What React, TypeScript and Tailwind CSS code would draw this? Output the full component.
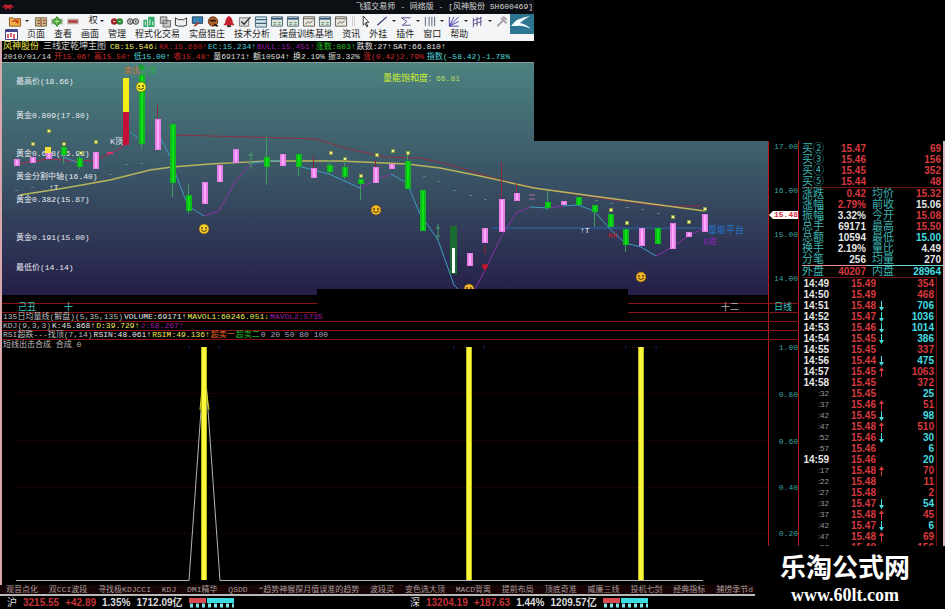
import type { ReactNode } from "react";

const mono = "font-['Liberation_Mono','Noto_Sans_CJK_SC',monospace]";
const sans = "font-['Liberation_Sans','Noto_Sans_CJK_SC',sans-serif]";

type Seg = { t: string; c: string };

const infoTop: Seg[] = [
  { t: "CB:15.546↓", c: "text-[#f4f060]" },
  { t: "KK:15.680↑", c: "text-[#b81c22]" },
  { t: "EC:15.234↑", c: "text-[#4ccfd6]" },
  { t: "BULL:15.451↑", c: "text-[#a01aa8]" },
  { t: "涨数:803↑", c: "text-[#22c025]" },
  { t: "跌数:27↑", c: "text-[#e4e4e4]" },
  { t: "SAT:66.810↑", c: "text-[#e4e4e4]" },
];

const infoBottom: Seg[] = [
  { t: "2010/01/14", c: "text-[#d4d4d4]" },
  { t: "开15.06↑", c: "text-[#d0282c]" },
  { t: "高15.50↑", c: "text-[#d0282c]" },
  { t: "低15.00↑", c: "text-[#4fd6dc]" },
  { t: "收15.48↑", c: "text-[#d0282c]" },
  { t: "量69171↑", c: "text-[#dedede]" },
  { t: "额10594↑", c: "text-[#dedede]" },
  { t: "换2.19%", c: "text-[#dedede]" },
  { t: "振3.32%", c: "text-[#dedede]" },
  { t: "涨(0.42)2.79%", c: "text-[#d0282c]" },
  { t: "指数(-58.42)-1.78%", c: "text-[#4fd6dc]" },
];

const indicators: Seg[][] = [
  [
    { t: "135日均量线(解盘)(5,35,135)", c: "text-[#bdbdbd]" },
    { t: "VOLUME:69171↑", c: "text-[#e8e8e8]" },
    { t: "MAVOL1:60246.051↓", c: "text-[#f0ec5a]" },
    { t: "MAVOL2:5735", c: "text-[#9c1aa4]" },
  ],
  [
    { t: "KDJ(9,3,3)", c: "text-[#bdbdbd]" },
    { t: "K:45.868↑", c: "text-[#e8e8e8]" },
    { t: "D:39.729↑", c: "text-[#f0ec5a]" },
    { t: "J:58.267↑", c: "text-[#9c1aa4]" },
  ],
  [
    { t: "RSI超跌---找顶(7,14)", c: "text-[#bdbdbd]" },
    { t: "RSIN:48.061↑", c: "text-[#e8e8e8]" },
    { t: "RSIM:49.136↑", c: "text-[#f0ec5a]" },
    { t: "超卖一", c: "text-[#e06a24]" },
    { t: "超卖二", c: "text-[#22b428]" },
    { t: "0 20 50 80 100", c: "text-[#a9a9c4]" },
  ],
];

const menus = ["页面", "查看", "画面", "管理", "程式化交易", "实盘猎庄", "技术分析", "操盘训练基地", "资讯", "外挂", "插件", "窗口", "帮助"];

const tabs = ["观音点化", "双CCI波段", "寻找极KDJCCI", "KDJ", "DMI精华", "QSDD", "“趋势神猴探月值误准的趋势", "波段买", "变色选大顶", "MACD背离", "提前布局", "顶底奇准", "威廉三线", "投机七剑", "经典指标", "捕捞季节d"];

const buys = [
  ["买②", "15.47", "69"],
  ["买③", "15.46", "156"],
  ["买④", "15.45", "352"],
  ["买⑤", "15.44", "48"],
];

const RED = "text-[#d8393f]";
const CYAN = "text-[#45dde0]";
const WHITE = "text-[#e6e6e6]";

const quotes = [
  ["涨跌", "0.42", RED, "均价", "15.32", RED],
  ["涨幅", "2.79%", RED, "前收", "15.06", WHITE],
  ["振幅", "3.32%", WHITE, "今开", "15.08", RED],
  ["总手", "69171", WHITE, "最高", "15.50", RED],
  ["总额", "10594", WHITE, "最低", "15.00", CYAN],
  ["换手", "2.19%", WHITE, "量比", "4.49", WHITE],
  ["分笔", "256", WHITE, "均量", "270", WHITE],
  ["外盘", "40207", RED, "内盘", "28964", CYAN],
];

// time, price, direction, volume, volume tone
const ticks: [string, string, string, string, string][] = [
  ["14:49", "15.49", "", "354", "r"],
  ["14:50", "15.49", "", "468", "r"],
  ["14:51", "15.48", "d", "706", "c"],
  ["14:52", "15.47", "d", "1036", "c"],
  ["14:53", "15.46", "d", "1014", "c"],
  ["14:54", "15.45", "d", "386", "c"],
  ["14:55", "15.45", "", "337", "r"],
  ["14:56", "15.44", "d", "475", "c"],
  ["14:57", "15.45", "u", "1063", "r"],
  ["14:58", "15.45", "", "372", "r"],
  [":32", "15.45", "", "25", "c"],
  [":37", "15.46", "u", "51", "r"],
  [":42", "15.45", "d", "98", "c"],
  [":47", "15.48", "u", "510", "r"],
  [":52", "15.46", "d", "30", "c"],
  [":57", "15.46", "", "6", "c"],
  ["14:59", "15.46", "", "20", "c"],
  [":17", "15.48", "u", "70", "r"],
  [":22", "15.48", "", "11", "r"],
  [":27", "15.48", "", "2", "r"],
  [":32", "15.47", "d", "54", "c"],
  [":37", "15.48", "u", "45", "r"],
  [":42", "15.47", "d", "6", "c"],
  [":47", "15.48", "u", "69", "r"],
  [":52", "15.48", "", "156", "r"],
];

// x, top, bottom, kind, wick top, wick bottom
const candles: [number, number, number, string, number, number][] = [
  [16, 159, 166, "m", 0, 0],
  [32, 157, 163, "m", 0, 0],
  [48, 152, 159, "m", 0, 0],
  [63, 147, 155, "g", 145, 164],
  [79, 158, 167, "g", 155, 169],
  [95, 152, 169, "m", 0, 0],
  [141, 75, 144, "g", 66, 149],
  [157, 119, 150, "m", 105, 119],
  [172, 124, 183, "g", 124, 197],
  [188, 195, 211, "g", 184, 214],
  [204, 182, 204, "m", 0, 0],
  [219, 165, 182, "m", 0, 0],
  [235, 149, 163, "m", 0, 0],
  [266, 157, 167, "g", 137, 185],
  [282, 154, 166, "m", 0, 0],
  [298, 154, 167, "g", 154, 176],
  [313, 168, 178, "m", 156, 168],
  [329, 165, 172, "g", 160, 175],
  [344, 167, 177, "g", 160, 179],
  [360, 179, 184, "g", 179, 200],
  [375, 167, 183, "m", 160, 167],
  [391, 164, 169, "m", 0, 0],
  [407, 161, 189, "g", 155, 189],
  [422, 190, 231, "g", 0, 0],
  [469, 253, 266, "m", 0, 0],
  [484, 228, 243, "m", 0, 0],
  [501, 199, 232, "m", 162, 199],
  [516, 193, 201, "m", 183, 193],
  [547, 202, 208, "g", 190, 210],
  [563, 201, 205, "m", 0, 0],
  [578, 197, 205, "g", 0, 0],
  [594, 205, 212, "g", 205, 227],
  [610, 214, 227, "g", 0, 0],
  [625, 229, 245, "g", 229, 252],
  [641, 228, 246, "m", 0, 0],
  [657, 228, 244, "g", 0, 0],
  [672, 223, 249, "m", 0, 0],
  [688, 232, 237, "m", 0, 0],
  [704, 214, 232, "m", 0, 0],
];

const dots = [
  [33, 144], [49, 131], [64, 144], [81, 153], [96, 142], [331, 153], [345, 159], [361, 176], [377, 155], [393, 151],
  [408, 153], [611, 210], [627, 223], [673, 217], [689, 222], [705, 209],
];

const greyDashes = [
  [16, 190], [32, 187], [110, 174], [126, 164], [141, 163], [424, 176], [438, 181], [454, 190], [470, 195], [485, 199],
  [596, 200], [611, 203], [627, 207], [642, 209], [658, 213],
];

const levels = [
  { y: 84, t: "最高价(18.66)" },
  { y: 118, t: "黄金0.809(17.80)" },
  { y: 156, t: "黄金0.618(16.93)" },
  { y: 179, t: "黄金分割中轴(16.40)" },
  { y: 202, t: "黄金0.382(15.87)" },
  { y: 240, t: "黄金0.191(15.00)" },
  { y: 270, t: "最低价(14.14)" },
];

function Smile({ x, y, fill }: { x: number; y: number; fill: string }) {
  return (
    <g>
      <circle cx={x} cy={y} r="5" fill={fill} stroke="#6b4a12" strokeWidth="0.6" />
      <path d={`M${x - 2} ${y - 2}v2M${x + 2} ${y - 2}v2`} stroke="#3c2a08" strokeWidth="1.2" />
      <path d={`M${x - 3} ${y + 1}q3 3 6 0`} fill="none" stroke="#3c2a08" strokeWidth="0.9" />
    </g>
  );
}

function PriceChart() {
  return (
    <svg viewBox="2 62 766 233" className={`block h-auto w-full text-[8px] ${mono}`} role="img" aria-label="K线图">
      <defs>
        <linearGradient id="sky" x1="0" y1="0" x2="0" y2="1">
          <stop offset="0" stopColor="#4c8280" />
          <stop offset="0.5" stopColor="#3a5365" />
          <stop offset="1" stopColor="#251e48" />
        </linearGradient>
      </defs>
      <rect x="2" y="62" width="766" height="233" fill="url(#sky)" />
      <rect x="2" y="62" width="766" height="1" fill="#8a9c9c" />

      <g fill="none" strokeWidth="1">
        <path d="M172 135L250 137L316 139L345 148L385 157L420 158L450 165L500 180L540 189L600 198L660 206L702 206" stroke="#8f2f42" />
        <path d="M16 164L48 159L79 161L95 160L112 153L125 145" stroke="#a82a55" />
        <path d="M20 195L65 188L110 180L150 170L172 167L210 164L266 161L340 161L407 164L440 168L480 176L534 188L600 197L660 205L705 211" stroke="#b8b65c" strokeWidth="1.3" />
        <path d="M492 228H704" stroke="#2868b0" />
        <path
          d="M63 157L79 163M130 132L138 138M160 137L172 160M175 172L188 206L204 216M251 163L282 160M298 166L329 174L360 188M391 174L407 183L420 214L438 240L454 285L458 289M530 207L548 208M563 206L578 205L594 211L610 229L625 243L641 247L656 256"
          stroke="#3f9cc4"
        />
        <path d="M204 216L219 211L235 182L251 163M360 188L375 180L391 174M475 289L485 270L501 237L516 213L530 207M548 208L563 206M656 256L672 247L690 235L704 228" stroke="#8b34a6" />
      </g>

      {greyDashes.map(([x, y]) => (
        <rect key={`${x}-${y}`} x={x - 1} y={y} width="3" height="1" fill="#5f7d78" />
      ))}

      <g fill="#e6eaf0">
        {levels.map((l) => (
          <text key={l.t} x="16" y={l.y}>{l.t}</text>
        ))}
      </g>

      {candles.map(([x, top, bottom, kind, w1, w2]) => (
        <g key={x}>
          {w2 > 0 && <rect x={x} y={w1} width="1" height={w2 - w1} fill={kind === "m" ? "#8a2a3a" : "#3f9a62"} />}
          <rect x={x - 2} y={top} width="6" height={bottom - top} fill={kind === "m" ? "#e67ee8" : "#0cba1a"} />
          <rect x={x} y={top + 1} width="2" height={bottom - top - 2} fill={kind === "m" ? "#ffa9ff" : "#10e01a"} />
        </g>
      ))}

      <rect x="45" y="147" width="6" height="6" fill="#f3df3a" />
      <rect x="107" y="152" width="6" height="2" fill="#e0306a" />
      <rect x="123" y="78" width="6" height="34" fill="#f6ec1a" />
      <rect x="123" y="112" width="6" height="33" fill="#c41038" />
      <path d="M251 152V169M248 155H254M248 163H254M438 224V240M436 228H440M436 236H440" stroke="#4a9a6a" fill="none" />
      <rect x="450" y="226" width="7" height="48" fill="#1c6b32" />
      <rect x="452" y="248" width="3" height="25" fill="#ffffff" />
      <path d="M529 195H535M529 199H535" stroke="#b46aa6" />
      <path d="M485 245V254" stroke="#9a2434" />
      <path d="M482 265q2 -2 3 0q1 -2 3 0q0 3 -3 5q-3 -2 -3 -5" fill="#c8142c" />

      {dots.map(([x, y]) => (
        <g key={`${x}-${y}`}>
          <rect x={x - 2} y={y - 2} width="4" height="4" fill="#8b9a3c" />
          <rect x={x - 1} y={y - 1} width="2" height="2" fill="#f4f29a" />
        </g>
      ))}

      <Smile x={141} y={87} fill="#eef02c" />
      <Smile x={204} y={229} fill="#f5cf2c" />
      <Smile x={376} y={210} fill="#f5b92c" />
      <Smile x={469} y={289} fill="#f5b92c" />
      <Smile x={641} y={277} fill="#f5b92c" />

      <path d="M138 67l3 -3l4 3l-2 3h-3z" fill="#129a2a" />
      <text x="124" y="73" fill="#d8702c">卖出</text>
      <text x="140" y="73" fill="#24b43c">见顶</text>
      <text x="110" y="144" fill="#e8e8f0">K顶</text>
      <text x="49" y="190" fill="#f0f0f4">↑T</text>
      <text x="580" y="233" fill="#f0f0f4">↑T</text>
      <text x="608" y="238" fill="#c8202c">KK</text>
      <text x="708" y="233" className="text-[9px]" fill="#2474c8">量能平台</text>
      <text x="704" y="244" fill="#9a1ec0">E底</text>
      <text x="383" y="81" className="text-[9px]" fill="#cdf032">量能饱和度</text>
      <text x="428" y="81" fill="#b8dc5a">：66.81</text>
    </svg>
  );
}

function SignalChart() {
  return (
    <svg viewBox="2 340 766 245" className="block h-auto w-full" role="img" aria-label="短线出击合成">
      <g stroke="#2e0606" strokeDasharray="2 2">
        <path d="M12 347.5H767M12 393.5H767M12 440.5H767M12 487.5H767M12 533.5H767" />
      </g>
      <path d="M16 580.5H189L201 410L204 348L208 410L220 580.5H703" fill="none" stroke="#b4b4b4" />
      {[202, 467, 639].map((x) => (
        <g key={x}>
          <rect x={x - 1} y="347" width="6" height="233" fill="#b9b71c" />
          <rect x={x} y="347" width="4" height="233" fill="#fbf83a" />
          <path d={`M${x - 13} 345v4M${x + 17} 345v4`} stroke="#14146a" />
        </g>
      ))}
      <path d="M202 388L200 410M206 388L209 410" stroke="#d8d420" />
    </svg>
  );
}

function ToolIcon({ kind }: { kind: string }) {
  const art: Record<string, ReactNode> = {
    open: <><path d="M1 3h4l1 1h7v8H1z" fill="#f0b04a" stroke="#8a5a1c" /><path d="M3 8q3 -5 7 -2l1 -2v5H7l2 -1q-3 -2 -6 0" fill="#c8401c" /></>,
    book: <><path d="M1 3h12v9H1z" fill="#c9b98a" stroke="#7a6a42" /><path d="M7 3v9M3 6h3M9 6h3M3 9h3M9 9h3" stroke="#8a3a2a" /></>,
    plus: <><path d="M1 4h12v6H1z" fill="#9aa88a" /><path d="M7 1l5 6l-5 6l-5 -6z" fill="#3c9a2c" /><path d="M7 4v6M4 7h6" stroke="#c4ec9c" /></>,
    minus: <><path d="M1 4h12v6H1z" fill="#b9a09a" /><path d="M2 7h10" stroke="#b02428" strokeWidth="2" /></>,
    pair: <><circle cx="4" cy="7" r="3.5" fill="#a8242c" /><circle cx="10" cy="7" r="3.5" fill="#2a8a34" /><path d="M3 7h2M9 7h2" stroke="#fff" /></>,
    eyes: <><circle cx="4" cy="7" r="3" fill="#ccc" stroke="#333" /><circle cx="10" cy="7" r="3" fill="#ccc" stroke="#333" /><path d="M4 6v2M10 6v2" stroke="#222" /></>,
    bars: <><path d="M1 5h4v8H1zM6 2h7v11H6z" fill="#35a86c" /><path d="M3 7v4M8 5v6M11 7v4" stroke="#e8fff0" /></>,
    copy: <><path d="M2 2h7v7H2zM5 6h8v7H5z" fill="#c4c4c4" stroke="#666" /></>,
    read: <path d="M1 3l3 2h6l3 -2v8l-3 1H4l-3 -1z" fill="#eee" stroke="#333" />,
    screen: <><path d="M2 2h11v7H2z" fill="#3c84b4" stroke="#1c3c5c" /><path d="M4 12l5 -4" stroke="#b43c2c" strokeWidth="2" /></>,
    coin: <><circle cx="7" cy="7" r="5" fill="#b0642c" stroke="#5c2c14" /><path d="M4 6h6M8 10l4 2" stroke="#2c1408" strokeWidth="2" /></>,
    bell: <><path d="M7 1q4 2 4 7l2 3H1l2 -3q0 -5 4 -7" fill="#c4202c" /><path d="M5 12h4" stroke="#222" strokeWidth="2" /></>,
    edit: <><path d="M1 3h10v9H1z" fill="#ddd" stroke="#777" /><path d="M3 7l3 3l7 -8" fill="none" stroke="#333" strokeWidth="1.5" /></>,
    list: <><path d="M1 2h12v11H1z" fill="#d4e4ea" stroke="#3c6478" /><path d="M1 5h12M1 9h12" stroke="#3c6478" strokeWidth="1.5" /></>,
    grid: <><path d="M1 2h12v10H1z" fill="#dfe8e4" stroke="#4a6470" /><path d="M1 4h12" stroke="#34607a" strokeWidth="2" /><path d="M3 8h3M8 8h3M3 10h3M8 10h3" stroke="#6c8c64" /></>,
    wave: <><path d="M1 2h12v10H1z" fill="#ece8de" stroke="#5c5c5c" /><path d="M1 4h12" stroke="#666" /><path d="M3 10l3 -3l2 2l3 -3" fill="none" stroke="#555" /></>,
    cursor: <path d="M4 1v10l2 -2l2 4l1 -1l-2 -4h3z" fill="#fff" stroke="#333" />,
    line: <path d="M2 11L12 2" stroke="#3a3a6a" strokeWidth="1.3" />,
    channel: <path d="M2 3h10M3 11h9M2 3l6 4l-5 4" fill="none" stroke="#5a4a8a" />,
    vlines: <path d="M2 2v10M6 2v10M9 2v10M12 2v10" stroke="#555a78" />,
    fan: <path d="M2 2v10h10M2 12L12 2M2 12L7 2M2 12L12 7" fill="none" stroke="#3a3aa0" />,
    ruler: <path d="M2 3v10M6 2v10M10 2v10M2 6l9 -3M2 10l9 -3" stroke="#5a4a8a" />,
    tool: <path d="M2 12l6 -6M6 3l6 6M8 2l4 3" stroke="#a89aa4" strokeWidth="2" />,
  };
  return (
    <svg viewBox="0 0 14 14" className="h-[13px] w-[14px]" aria-hidden="true">
      <g fill="none">{art[kind]}</g>
    </svg>
  );
}

const tools = ["pair", "eyes", "bars", "copy", "read", "screen", "coin", "bell", "edit", "list", "grid", "grid", "wave", "grid", "wave"];
const drawTools = ["line", "channel", "vlines", "fan", "ruler"];

function ToolButton({ kind, label }: { kind: string; label: string }) {
  return (
    <button type="button" aria-label={label} className="flex w-4 shrink-0 justify-center">
      <ToolIcon kind={kind} />
    </button>
  );
}

function Caret() {
  return (
    <svg viewBox="0 0 8 4" className="h-1 w-2 shrink-0" aria-hidden="true">
      <path d="M2 1h4l-2 2z" fill="#222" />
    </svg>
  );
}

function Header() {
  return (
    <header>
      <div className="flex h-[14px] items-center bg-[#0c0f13] text-[8px] text-[#d6d6d6]">
        <svg viewBox="0 0 14 10" className="ml-[1px] h-[10px] w-[14px]" aria-hidden="true">
          <path d="M1 6q2 -5 6 -3q4 -2 6 3l-3 -1v3l-3 -2l-3 2v-3z" fill="#c4202c" />
        </svg>
        <h1 className="w-[518px] text-right leading-[12px] whitespace-nowrap">飞狐交易师 - 网络版 - [风神股份 SH600469]</h1>
      </div>
      <div className="flex h-[27px] w-[534px] items-start bg-[#f4f5f7] text-[9px] text-[#222]">
        <div className="min-w-0 flex-1">
          <div className="flex h-[14px] items-center pl-[7px]">
            <ToolButton kind="open" label="打开" />
            <Caret />
            <span className="w-[2px]" />
            <ToolButton kind="book" label="数据" />
            <ToolButton kind="plus" label="加入" />
            <ToolButton kind="minus" label="删除" />
            <button type="button" className="ml-2 flex items-center leading-[12px]">权<Caret /></button>
            <span className="w-1" />
            {tools.map((k, i) => (
              <ToolButton key={i} kind={k} label={`工具${i + 1}`} />
            ))}
            <span className="mx-[3px] h-[10px] w-[3px] border-x border-[#ccc]" />
            <ToolButton kind="cursor" label="选择" />
            {drawTools.map((k) => (
              <div key={k} className="flex items-center">
                <ToolButton kind={k} label={k} />
                <Caret />
              </div>
            ))}
            <ToolButton kind="tool" label="设置" />
          </div>
          <nav className="flex h-[13px] items-center gap-[9px] pl-[5px] leading-[12px] whitespace-nowrap">
            <svg viewBox="0 0 13 11" className="h-[11px] w-[13px]" aria-hidden="true">
              <path d="M0.5 0.5h12v10h-12z" fill="#fff" stroke="#44488a" />
              <path d="M0 2h13" stroke="#44488a" strokeWidth="2" />
              <path d="M3 5v4M6 4v4M9 5v5" stroke="#c4303a" strokeWidth="1.5" />
            </svg>
            {menus.map((m) => (
              <button key={m} type="button">{m}</button>
            ))}
          </nav>
        </div>
        <svg viewBox="0 0 24 20" className="h-5 w-6 shrink-0" aria-hidden="true">
          <rect width="24" height="20" fill="#2c7490" />
          <path d="M1 12Q6 4 20 2Q13 6 10 9Q16 10 21 15Q12 11 7 12Q3 12 1 12" fill="#f2fafc" />
        </svg>
      </div>
    </header>
  );
}

function Segments({ items, gap }: { items: Seg[]; gap: string }) {
  return (
    <div className={`flex whitespace-nowrap ${gap}`}>
      {items.map((s) => (
        <span key={s.t} className={s.c}>{s.t}</span>
      ))}
    </div>
  );
}

function Row({ children, axis, className }: { children?: ReactNode; axis?: ReactNode; className: string }) {
  return (
    <div className={`flex ${className}`}>
      <div className="min-w-0 flex-1">{children}</div>
      <div className="w-[31px] shrink-0 border-x border-[#b01c1c] text-right text-[#3fa3a0]">{axis}</div>
    </div>
  );
}

function Arrow({ dir }: { dir: string }) {
  if (!dir) return null;
  return (
    <svg viewBox="0 0 5 10" className={`mx-auto block h-[10px] w-[5px] ${dir === "u" ? "rotate-180 text-[#d8393f]" : "text-[#45dde0]"}`} aria-hidden="true">
      <path d="M2 0h1v6h2l-2.500 4l-2.500 -4h2z" fill="currentColor" />
    </svg>
  );
}

function QuotePanel() {
  return (
    <aside className={`w-[146px] shrink-0 border-r-2 border-[#d8b4bc] pt-[102px] pl-[3px] text-[10px] leading-[11px] font-bold ${sans}`}>
      <table className="w-full table-fixed border-collapse">
        <colgroup>
          <col className="w-[24px]" />
          <col className="w-[40px]" />
          <col className="w-[30px]" />
          <col />
        </colgroup>
        <tbody>
          {buys.map(([label, price, vol]) => (
            <tr key={label} className="h-[11px]">
              <th className="text-left text-[11px] font-normal whitespace-nowrap text-[#3cb4b0]">{label}</th>
              <td className={`text-right ${RED}`}>{price}</td>
              <td />
              <td className={`pr-[2px] text-right ${RED}`}>{vol}</td>
            </tr>
          ))}
          {quotes.map(([l1, v1, c1, l2, v2, c2], i) => {
            const left = i === 0 ? "border-t border-[#6a1414]" : i === 7 ? "border-t border-[#e88a8a]" : "";
            const right = i === 0 ? "border-t border-[#6a1414]" : i === 7 ? "border-t border-[#6ed8da]" : "";
            return (
              <tr key={l1} className="h-[11px]">
                <th className={`text-left text-[11px] font-normal whitespace-nowrap text-[#3cb4b0] ${left}`}>{l1}</th>
                <td className={`text-right ${c1} ${left}`}>{v1}</td>
                <th className={`pl-[6px] text-left text-[11px] font-normal whitespace-nowrap text-[#3cb4b0] ${right}`}>{l2}</th>
                <td className={`pr-[2px] text-right ${c2} ${right}`}>{v2}</td>
              </tr>
            );
          })}
        </tbody>
      </table>
      <div className="mr-[6px] border-t border-r border-[#6a1414]">
        <table className="w-full table-fixed border-collapse">
          <colgroup>
            <col className="w-[27px]" />
            <col className="w-[47px]" />
            <col className="w-[11px]" />
            <col />
          </colgroup>
          <tbody>
            {ticks.map(([time, price, dir, vol, tone], i) => (
              <tr key={i} className="h-[11px]">
                <td className={`text-right ${time.length > 3 ? WHITE : "text-[8px] font-normal text-[#9a9a9a]"}`}>{time}</td>
                <td className={`text-right ${RED}`}>{price}</td>
                <td><Arrow dir={dir} /></td>
                <td className={`pr-[2px] text-right ${tone === "c" ? CYAN : RED}`}>{vol}</td>
              </tr>
            ))}
          </tbody>
        </table>
      </div>
    </aside>
  );
}

function Meter() {
  return (
    <svg viewBox="0 0 45 10" className="h-[10px] w-[45px]" aria-hidden="true">
      <rect width="17" height="5" fill="#d84a50" />
      <rect x="18" width="27" height="5" fill="#3cdce0" />
      <path d="M1 7.500H45" stroke="#7ce4e6" strokeWidth="4" strokeDasharray="3 3" />
    </svg>
  );
}

function StatusBar() {
  return (
    <footer className={`flex h-[13px] items-center pl-[7px] text-[10px] leading-[12px] font-bold whitespace-nowrap text-[#dcdcdc] ${sans}`}>
      <div className="flex w-[403px] items-center gap-[6px]">
        <span className="font-normal">沪</span>
        <span className="text-[#c43238]">3215.55</span>
        <span className="text-[#c43238]">+42.89</span>
        <span>1.35%</span>
        <span>1712.09亿</span>
        <Meter />
      </div>
      <div className="flex items-center gap-[6px]">
        <span className="font-normal">深</span>
        <span className="text-[#c43238]">13204.19</span>
        <span className="text-[#c43238]">+187.63</span>
        <span>1.44%</span>
        <span>1209.57亿</span>
        <Meter />
      </div>
    </footer>
  );
}

export default function App() {
  return (
    <div className={`relative flex min-h-screen w-full flex-col overflow-hidden bg-black text-[8px] leading-[9px] ${mono}`}>
      <Header />
      <main className="relative flex">
        <section className="relative min-w-0 flex-1 border-l-2 border-[#d8a8ac]">
          <Row
            className=""
            axis={
              <div className="pt-[102px] leading-[8px]">
                <div className="h-11">17.00</div>
                <div className="h-6">16.00</div>
                <div className="h-5">
                  <span className="flex items-center font-bold text-[#d8303a]">
                    <span className="h-0 w-0 border-y-4 border-r-4 border-y-transparent border-r-white" />
                    <span className="flex-1 bg-white">15.48</span>
                  </span>
                </div>
                <div className="h-11">15.00</div>
                <div>14.00</div>
              </div>
            }
          >
            <div className="flex h-[11px] items-baseline gap-1 pt-[1px] pl-[1px] leading-[10px] whitespace-nowrap">
              <span className="text-[9px] text-[#f0ec4c]">风神股份</span>
              <span className="text-[9px] text-[#c8c8c8]">三线定乾坤主图</span>
              <Segments items={infoTop} gap="gap-[1px]" />
            </div>
            <div className="h-[10px] pl-[1px]">
              <Segments items={infoBottom} gap="gap-[3px]" />
            </div>
            <PriceChart />
            <div className="h-2" />
          </Row>
          <Row className="h-[9px] border-t border-[#8a1414] leading-[8px]" axis={<span className="block pr-[6px] text-[9px] text-[#3cc4c0]">日线</span>}>
            <div className="flex pl-4 text-[9px] text-[#3cc4c0]">
              <span>己丑</span>
              <span className="ml-[28px]">十</span>
              <span className="ml-auto pr-[29px] text-[#b0b8b8]">十二</span>
            </div>
          </Row>
          {indicators.map((row, i) => (
            <Row key={i} className="h-[9px] border-t border-[#8a1414] leading-[7px]">
              <div className="pl-[1px]">
                <Segments items={row} gap="gap-[1px]" />
              </div>
            </Row>
          ))}
          <Row
            className="border-t border-[#8a1414]"
            axis={
              <div className="pt-[3px]">
                <div className="h-[47px]">1.00</div>
                <div className="h-[47px]">0.80</div>
                <div className="h-[46px]">0.60</div>
                <div className="h-[46px]">0.40</div>
                <div>0.20</div>
              </div>
            }
          >
            <div className="relative">
              <SignalChart />
              <p className="absolute top-0 left-[1px] text-[8px] text-[#bdbdbd]">短线出击合成 合成 0</p>
            </div>
          </Row>
          <div className="absolute top-[248px] left-[39.5%] h-[24px] w-[311px] bg-black" />
        </section>
        <QuotePanel />
      </main>
      <div className="mr-[190px] flex h-[11px] items-center justify-between border-b-2 border-[#b8b8b8] bg-[#160404] pr-[2px] pl-[6px] leading-[9px] whitespace-nowrap text-[#a89c9c]">
        {tabs.map((t) => (
          <button key={t} type="button">{t}</button>
        ))}
      </div>
      <StatusBar />

      <div className="absolute top-0 right-0 h-[141px] w-[411px] bg-black" />
      <div className="absolute right-0 bottom-0 flex h-[63px] w-[190px] flex-col items-center bg-black pt-2 pr-[10px] text-white">
        <strong className={`text-[26px] leading-[28px] ${sans}`}>乐淘公式网</strong>
        <a href="#home" className="font-['Liberation_Serif',serif] text-[18px] leading-[26px] font-bold">www.60lt.com</a>
      </div>
    </div>
  );
}
